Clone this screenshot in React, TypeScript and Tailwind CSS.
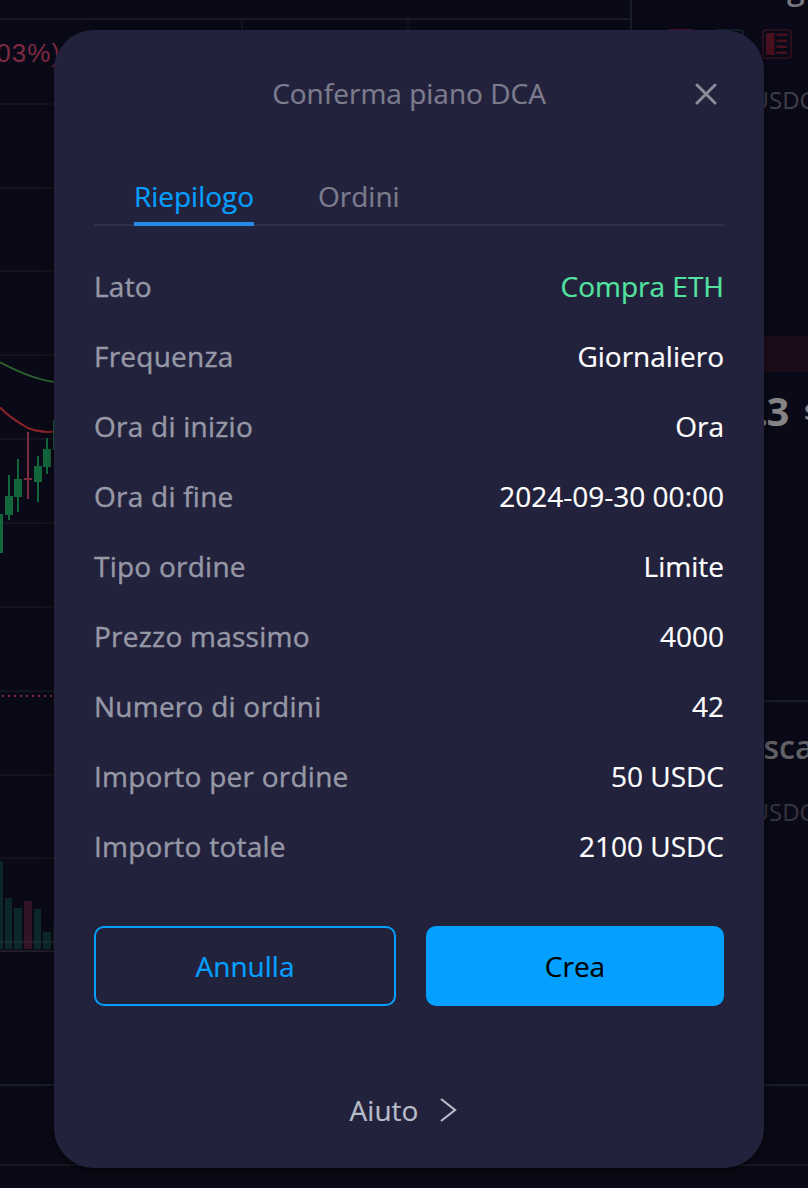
import React from "react";

type Row = { label: string; value: string; accent?: boolean };

const rows: Row[] = [
  { label: "Lato", value: "Compra ETH", accent: true },
  { label: "Frequenza", value: "Giornaliero" },
  { label: "Ora di inizio", value: "Ora" },
  { label: "Ora di fine", value: "2024-09-30 00:00" },
  { label: "Tipo ordine", value: "Limite" },
  { label: "Prezzo massimo", value: "4000" },
  { label: "Numero di ordini", value: "42" },
  { label: "Importo per ordine", value: "50 USDC" },
  { label: "Importo totale", value: "2100 USDC" },
];

const gridLines = [104, 188, 271, 355, 439, 523, 607, 691, 775, 858, 942];

// x, wick top, wick bottom, body top, body bottom
const candles = [
  { x: -5, top: 514, bottom: 553, open: 514, close: 553, w: 8 },
  { x: 5, top: 475, bottom: 520, open: 496, close: 515, w: 8 },
  { x: 14, top: 459, bottom: 512, open: 479, close: 497, w: 8 },
  { x: 34, top: 456, bottom: 502, open: 466, close: 482, w: 8 },
  { x: 43, top: 438, bottom: 474, open: 449, close: 467, w: 8 },
  { x: 53, top: 420, bottom: 450, open: 420, close: 450, w: 8 },
];

const volumes = [
  { x: -5, y: 861, w: 8, up: true },
  { x: 5, y: 898, w: 7, up: true },
  { x: 14, y: 908, w: 8, up: true },
  { x: 24, y: 901, w: 8, up: false },
  { x: 34, y: 909, w: 7, up: true },
  { x: 43, y: 932, w: 8, up: true },
  { x: 53, y: 926, w: 8, up: true },
];

function Chart() {
  return (
    <svg className="block h-[1188px] w-[630px]" viewBox="0 0 630 1188" fill="none">
      <g fill="#13131f">
        {gridLines.map((y) => (
          <rect key={y} x="0" y={y - 1} width="630" height="2" />
        ))}
        <rect x="241" y="20" width="2" height="930" />
        <rect x="407" y="20" width="2" height="930" />
      </g>
      <rect x="0" y="18" width="630" height="2" fill="#1a1a26" />
      <rect x="0" y="950" width="630" height="2" fill="#1d1d28" />
      <rect x="0" y="1084" width="630" height="2" fill="#181d2a" />
      <rect x="0" y="1164" width="630" height="2" fill="#181823" />
      <path d="M2 696H630" stroke="#7d2a42" strokeWidth="2" strokeDasharray="2 4" />
      {volumes.map((v) => (
        <rect key={v.x} x={v.x} y={v.y} width={v.w} height={949 - v.y} fill={v.up ? "#0c2828" : "#311428"} />
      ))}
      <rect x="0" y="941" width="54" height="2" fill="#ffffff" fillOpacity="0.04" />
      <path d="M0 362.5C17 371 36 380 55 382" stroke="#2b5f2e" strokeWidth="2" />
      <path d="M0 407.500C9 417 19 423 28 428C38 432 46 432.500 55 431.500" stroke="#8b2329" strokeWidth="2" />
      {candles.map((c) => (
        <g key={c.x} fill="#12663c">
          <rect x={c.x + 3} y={c.top} width="2" height={c.bottom - c.top} />
          <rect x={c.x} y={c.open} width={c.w} height={c.close - c.open} />
        </g>
      ))}
      <rect x="27" y="432" width="2" height="67" fill="#7d2a42" />
      <rect x="24" y="478" width="8" height="2" fill="#7d2a42" />
    </svg>
  );
}

function BookIcon({ tone }: { tone: "red" | "green" | "dark" }) {
  const stroke = tone === "red" ? "#5a1a30" : tone === "green" ? "#12282f" : "#35101f";
  return (
    <svg className="block size-[30px]" viewBox="0 0 30 30" fill="none">
      <rect x="1" y="1" width="28" height="28" rx="3" stroke={stroke} strokeWidth="1.600" />
      <rect x="4" y="4" width="8.500" height="22" rx="1" fill="#46101e" />
      <path d="M15.500 5.800h8.500M15.500 11.800h8.500M15.500 17.800h8.500M15.500 23.800h8.500" stroke="#46101e" strokeWidth="2.600" strokeLinecap="round" />
    </svg>
  );
}

function MarketPanel() {
  return (
    <aside className="flex h-full w-[178px] shrink-0 flex-col overflow-hidden whitespace-nowrap">
      <div className="h-[1084px] shrink-0 border-l-2 border-[#181d2a]">
        <div className="-mt-[32px] h-[61px] pl-[155px] text-[32px] leading-[38px] font-semibold text-[#77777c]">gine</div>
        <div className="flex gap-[18px] pl-[33.5px]">
          <BookIcon tone="red" />
          <BookIcon tone="green" />
          <BookIcon tone="dark" />
        </div>
        <div className="mt-[25px] pl-[119.5px] text-[24px] leading-[32px] text-[#404047]">USDC</div>
        <div className="mt-[220px] h-[36px] bg-[#1d0d1a]" />
        <div className="mt-[10px] flex h-[57px] items-center gap-[17px] pl-[125px] font-bold text-[#858585]">
          <span className="text-[40px] leading-[56px] tracking-[-2px]">.3</span>
          <span className="pt-[3px] text-[24px]">$</span>
        </div>
        <div className="mt-[261px] h-[2px] bg-[#181d2a]" />
        <div className="mt-[25px] pl-[131.5px] text-[32px] leading-[40px] font-semibold text-[#606065]">scambi</div>
        <div className="mt-[29px] pl-[119.5px] text-[24px] leading-[32px] text-[#36363e]">USDC</div>
      </div>
      <div className="h-[2px] shrink-0 bg-[#181d2a]" />
      <div className="mt-[78px] h-[2px] shrink-0 bg-[#181823]" />
    </aside>
  );
}

export default function App() {
  return (
    <div className="relative h-[1188px] w-[808px] overflow-hidden bg-[#0a0917] font-['Open_Sans',sans-serif]">
      <div className="flex h-full">
        <div className="relative w-[630px] shrink-0">
          <Chart />
          <span className="absolute top-[36px] right-[569px] font-['Liberation_Sans',sans-serif] text-[26px] leading-[34px] tracking-[1px] whitespace-nowrap text-[#7d2a42]">
            (-0.03%)
          </span>
        </div>
        <MarketPanel />
      </div>

      <div
        role="dialog"
        className="absolute top-[30px] left-[54px] flex h-[1138px] w-[710px] flex-col rounded-[40px] bg-[#23223d] px-[40px] shadow-[0_4px_10px_rgba(0,0,0,0.5)] [-webkit-text-stroke:0.2px]"
      >
        <header className="flex h-[128px] items-center justify-center">
          <h1 className="w-full pb-[2px] pl-[29px] text-center text-[28px] leading-[38px] text-[#7c7c8d]">Conferma piano DCA</h1>
          <button aria-label="Chiudi" className="mr-[7px] shrink-0">
            <svg className="block size-[22px]" viewBox="0 0 22 22" fill="none">
              <path d="M2 2L20 20M20 2L2 20" stroke="#8b8b9a" strokeWidth="3" strokeLinecap="round" />
            </svg>
          </button>
        </header>

        <nav className="mt-[16px] flex h-[52px] gap-[64px] border-b-2 border-[#30304c] pl-[40px] text-[28px] leading-[42px]">
          <button className="flex h-[52px] w-[120px] justify-center border-b-4 border-[#228be6] pt-[1px] text-[#04a0ff]">Riepilogo</button>
          <button className="flex h-[52px] border-b-4 border-transparent pt-[1px] text-[#7c7c8d]">Ordini</button>
        </nav>

        <dl className="mt-[25px] flex flex-col">
          {rows.map((row) => (
            <div key={row.label} className="flex h-[70px] items-center justify-between text-[28px] leading-[38px]">
              <dt className="tracking-[0.240px] text-[#9698a6] [-webkit-text-stroke:0.4px]">{row.label}</dt>
              <dd className={row.accent ? "text-[#53e3a0]" : "text-white"}>{row.value}</dd>
            </div>
          ))}
        </dl>

        <div className="mt-[45px] flex h-[80px] shrink-0 gap-[30px] text-[28px]">
          <button className="w-[302px] rounded-[10px] border-2 border-[#04a0ff] text-[#04a0ff]">Annulla</button>
          <button className="w-[298px] rounded-[10px] bg-[#04a0ff] text-black">Crea</button>
        </div>

        <button className="mt-[85px] flex h-[38px] items-center justify-center gap-[22px] pr-[11px] text-[28px] leading-[38px] text-[#b6bcc8]">
          <span>Aiuto</span>
          <svg className="block h-[24px] w-[17px]" viewBox="0 0 17 24" fill="none">
            <path d="M1 1L15 12L1 23" stroke="#b6bcc8" strokeWidth="2.200" />
          </svg>
        </button>
      </div>
    </div>
  );
}
